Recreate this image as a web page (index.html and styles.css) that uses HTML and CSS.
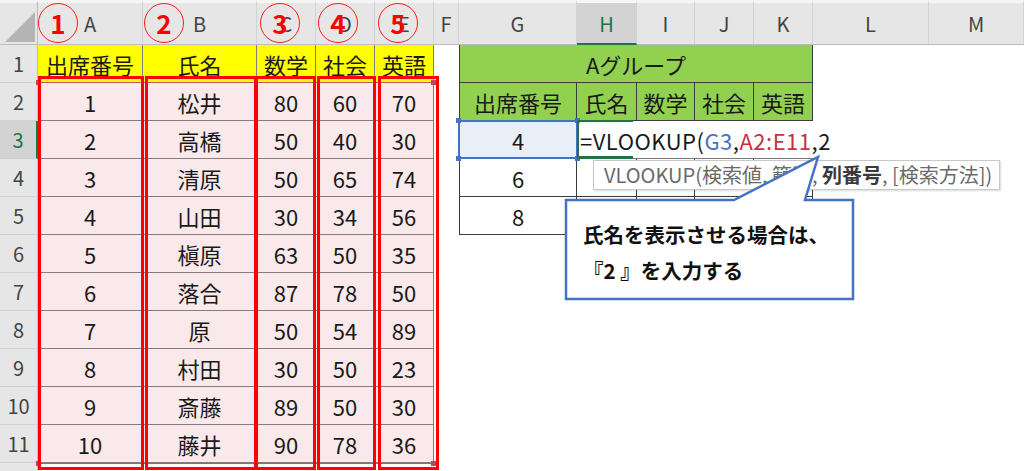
FILE: index.html
```html
<!DOCTYPE html>
<html lang="ja">
<head>
<meta charset="utf-8">
<title>VLOOKUP</title>
<link rel="stylesheet" href="styles.css">
</head>
<body>
<div class="sheet">
  <div class="ch corner"><svg width="37" height="41" viewBox="0 0 37 41"><polygon points="35,9 35,39 5,39" fill="#b4b4b4"/></svg></div>
  <div class="ch">A</div><div class="ch">B</div><div class="ch">C</div><div class="ch">D</div><div class="ch">E</div><div class="ch">F</div><div class="ch">G</div><div class="ch ch-act">H</div><div class="ch">I</div><div class="ch">J</div><div class="ch">K</div><div class="ch">L</div><div class="ch">M</div>

  <div class="rh">1</div>
  <div class="c y">出席番号</div><div class="c y">氏名</div><div class="c y">数学</div><div class="c y">社会</div><div class="c y">英語</div>
  <div class="c"></div>
  <div class="c g gl merge">Aグループ</div>
  <div class="c"></div><div class="c"></div>

  <div class="rh">2</div>
  <div class="c p">1</div><div class="c p">松井</div><div class="c p">80</div><div class="c p">60</div><div class="c p">70</div>
  <div class="c"></div>
  <div class="c g gl">出席番号</div><div class="c g">氏名</div><div class="c g">数学</div><div class="c g">社会</div><div class="c g">英語</div>
  <div class="c"></div><div class="c"></div>

  <div class="rh rh-act">3</div>
  <div class="c p">2</div><div class="c p">高橋</div><div class="c p">50</div><div class="c p">40</div><div class="c p">30</div>
  <div class="c"></div>
  <div class="c t tl sel">4</div>
  <div class="c edit"><span class="formula">=VLOOKUP(<span class="ref-b">G3</span>,<span class="ref-r">A2:E11</span>,2</span></div>
  <div class="c t3"></div><div class="c t3"></div><div class="c t3"></div>
  <div class="c"></div><div class="c"></div>

  <div class="rh">4</div>
  <div class="c p">3</div><div class="c p">清原</div><div class="c p">50</div><div class="c p">65</div><div class="c p">74</div>
  <div class="c"></div>
  <div class="c t tl">6</div><div class="c t"></div><div class="c t"></div><div class="c t"></div><div class="c t"></div>
  <div class="c"></div><div class="c"></div>

  <div class="rh">5</div>
  <div class="c p">4</div><div class="c p">山田</div><div class="c p">30</div><div class="c p">34</div><div class="c p">56</div>
  <div class="c"></div>
  <div class="c t tl">8</div><div class="c t"></div><div class="c t"></div><div class="c t"></div><div class="c t"></div>
  <div class="c"></div><div class="c"></div>

  <div class="rh">6</div>
  <div class="c p">5</div><div class="c p">槇原</div><div class="c p">63</div><div class="c p">50</div><div class="c p">35</div>
  <div class="c"></div><div class="c"></div><div class="c"></div><div class="c"></div><div class="c"></div><div class="c"></div><div class="c"></div><div class="c"></div>

  <div class="rh">7</div>
  <div class="c p">6</div><div class="c p">落合</div><div class="c p">87</div><div class="c p">78</div><div class="c p">50</div>
  <div class="c"></div><div class="c"></div><div class="c"></div><div class="c"></div><div class="c"></div><div class="c"></div><div class="c"></div><div class="c"></div>

  <div class="rh">8</div>
  <div class="c p">7</div><div class="c p">原</div><div class="c p">50</div><div class="c p">54</div><div class="c p">89</div>
  <div class="c"></div><div class="c"></div><div class="c"></div><div class="c"></div><div class="c"></div><div class="c"></div><div class="c"></div><div class="c"></div>

  <div class="rh">9</div>
  <div class="c p">8</div><div class="c p">村田</div><div class="c p">30</div><div class="c p">50</div><div class="c p">23</div>
  <div class="c"></div><div class="c"></div><div class="c"></div><div class="c"></div><div class="c"></div><div class="c"></div><div class="c"></div><div class="c"></div>

  <div class="rh">10</div>
  <div class="c p">9</div><div class="c p">斎藤</div><div class="c p">89</div><div class="c p">50</div><div class="c p">30</div>
  <div class="c"></div><div class="c"></div><div class="c"></div><div class="c"></div><div class="c"></div><div class="c"></div><div class="c"></div><div class="c"></div>

  <div class="rh">11</div>
  <div class="c p">10</div><div class="c p">藤井</div><div class="c p">90</div><div class="c p">78</div><div class="c p">36</div>
  <div class="c"></div><div class="c"></div><div class="c"></div><div class="c"></div><div class="c"></div><div class="c"></div><div class="c"></div><div class="c"></div>

  <div class="rh rh-last"></div>
  <div class="c"></div><div class="c"></div><div class="c"></div><div class="c"></div><div class="c"></div><div class="c"></div><div class="c"></div><div class="c"></div><div class="c"></div><div class="c"></div><div class="c"></div><div class="c"></div><div class="c"></div>
</div>

<!-- reference range A2:E11 -->
<div class="range"><span class="hd hd-tl"></span><span class="hd hd-tr"></span><span class="hd hd-bl"></span><span class="hd hd-br"></span></div>
<!-- reference G3 -->
<div class="refg3"><span class="hb hb-tl"></span><span class="hb hb-tr"></span><span class="hb hb-bl"></span><span class="hb hb-br"></span></div>
<!-- active cell H3 -->
<div class="active"></div>

<!-- red boxes -->
<div class="rbox rbox1"></div>
<div class="rbox rbox2"></div>
<div class="rbox rbox3"></div>
<div class="rbox rbox4"></div>
<div class="rbox rbox5"></div>

<!-- circled numbers -->
<div class="circ circ1">1</div>
<div class="circ circ2">2</div>
<div class="circ circ3">3</div>
<div class="circ circ4">4</div>
<div class="circ circ5">5</div>

<!-- function tooltip -->
<div class="tip">VLOOKUP(検索値, 範囲, <b>列番号</b>, [検索方法])</div>

<!-- callout -->
<div class="callout">
  <svg class="callout-shape" width="300" height="155" viewBox="0 0 300 155"><path d="M6,50 L174,50 L258,7 L245,50 L293,50 L293,149 L6,149 Z" fill="#fff" stroke="#4472c4" stroke-width="2.5" stroke-linejoin="miter"/></svg>
  <p class="callout-text">氏名を表示させる場合は、<br>『2 』を入力する</p>
</div>
</body>
</html>
```

FILE: styles.css
```css
* { box-sizing: border-box; }
html, body { margin: 0; padding: 0; background: #fff; }
body {
  width: 1024px;
  height: 471px;
  overflow: hidden;
  position: relative;
  font-family: "Noto Sans CJK JP", "Noto Sans", sans-serif;
  color: #1a1a1a;
}
.sheet {
  display: grid;
  grid-template-columns: 38px 105px 114px 59px 59px 59px 25px 118px 60px 58px 59px 59px 116px 95px;
  grid-template-rows: 45px repeat(11, 38px) 8px;
}
.ch {
  background: #e6e6e6;
  border-top: 3px solid #f6f6f6;
  border-right: 1px solid #d2d2d2;
  border-bottom: 1px solid #bdbdbd;
  color: #444;
  font-size: 20px;
  display: flex;
  align-items: center;
  justify-content: center;
}
.corner { display: block; border-right-color: #bdbdbd; }
.corner svg { display: block; }
.ch-act {
  background: #d3d3d3;
  color: #217346;
  border-bottom: 2px solid #217346;
}
.rh {
  background: #e6e6e6;
  border-right: 1px solid #bdbdbd;
  border-bottom: 1px solid #d2d2d2;
  color: #444;
  font-size: 20px;
  display: flex;
  align-items: center;
  justify-content: center;
}
.rh-last { border-bottom: none; }
.rh-act {
  background: #d3d3d3;
  color: #217346;
  border-right: 2px solid #217346;
}
.c {
  font-size: 22px;
  display: flex;
  align-items: center;
  justify-content: center;
  white-space: nowrap;
}
.y { background: #ffff00; border-right: 1px solid #808080; border-bottom: 1px solid #808080; }
.p { background: #f9e9ea; border-right: 1px solid #857d7d; border-bottom: 1px solid #857d7d; }
.g { background: #92d050; border-right: 1px solid #3c3c3c; border-bottom: 1px solid #3c3c3c; }
.gl { border-left: 1px solid #3c3c3c; }
.merge { grid-column: span 5; }
.t { border-right: 1px solid #3c3c3c; border-bottom: 1px solid #3c3c3c; }
.tl { border-left: 1px solid #3c3c3c; }
.t3 { border-bottom: 1px solid #7a7a7a; }
.sel { background: #e8eff9; }
.edit {
  justify-content: flex-start;
  overflow: visible;
  position: relative;
  z-index: 1;
  border-bottom: 1px solid #7a7a7a;
}
.formula { padding-left: 3px; font-size: 22px; letter-spacing: 0.5px; color: #1a1a1a; }
.ref-b { color: #4472c4; }
.ref-r { color: #c8323f; }

/* reference highlight A2:E11 */
.range {
  position: absolute;
  left: 38px; top: 82px; width: 396px; height: 382px;
  border: 1px solid #c45466;
}
.hd { position: absolute; width: 5px; height: 5px; background: #b9485a; }
.hd-tl { left: -3px; top: -3px; }
.hd-tr { right: -3px; top: -3px; }
.hd-bl { left: -3px; bottom: -3px; }
.hd-br { right: -3px; bottom: -3px; }

/* reference highlight G3 */
.refg3 {
  position: absolute;
  left: 458px; top: 120px; width: 120px; height: 39px;
  border: 2px solid #4472c4;
}
.hb { position: absolute; width: 5px; height: 5px; background: #4472c4; }
.hb-tl { left: -4px; top: -4px; }
.hb-tr { right: -4px; top: -4px; }
.hb-bl { left: -4px; bottom: -4px; }
.hb-br { right: -4px; bottom: -4px; }

/* active cell H3 */
.active {
  position: absolute;
  left: 577px; top: 120px; width: 56px; height: 39px;
  border-left: 2px solid #217346;
  border-top: 2px solid #217346;
  border-bottom: 3px solid #217346;
  z-index: 2;
}

/* red boxes */
.rbox {
  position: absolute;
  top: 76px;
  height: 394px;
  border: 3px solid #ff0000;
}
.rbox1 { left: 38px; width: 106px; }
.rbox2 { left: 145px; width: 112px; }
.rbox3 { left: 255px; width: 61px; }
.rbox4 { left: 317px; width: 59px; }
.rbox5 { left: 378px; width: 61px; }

/* circled numbers */
.circ {
  position: absolute;
  top: 3px;
  width: 40px; height: 40px;
  border: 1.5px solid #ff1a1a;
  border-radius: 50%;
  color: #ff0000;
  font-family: "Noto Sans CJK JP", sans-serif;
  font-weight: 700;
  font-size: 26px;
  line-height: 37px;
  text-align: center;
}
.circ1 { left: 38px; }
.circ2 { left: 144px; }
.circ3 { left: 260px; }
.circ4 { left: 318px; }
.circ5 { left: 378px; }

/* tooltip */
.tip {
  position: absolute;
  left: 593px; top: 160px; width: 407px; height: 30px;
  background: #fff;
  border: 1px solid #c8c8c8;
  box-shadow: 1px 1px 2px rgba(0,0,0,0.15);
  padding-left: 10px;
  font-size: 20px;
  line-height: 27px;
  color: #6c6a68;
  white-space: nowrap;
  z-index: 3;
}
.tip b { color: #3a3a3a; font-weight: 700; }

/* callout */
.callout {
  position: absolute;
  left: 560px; top: 150px; width: 300px; height: 155px;
  z-index: 4;
}
.callout-shape { position: absolute; left: 0; top: 0; display: block; }
.callout-text {
  position: absolute;
  left: 23px; top: 66px;
  margin: 0;
  font-size: 20.5px;
  font-weight: 700;
  line-height: 36px;
  color: #111;
  white-space: nowrap;
}
```
